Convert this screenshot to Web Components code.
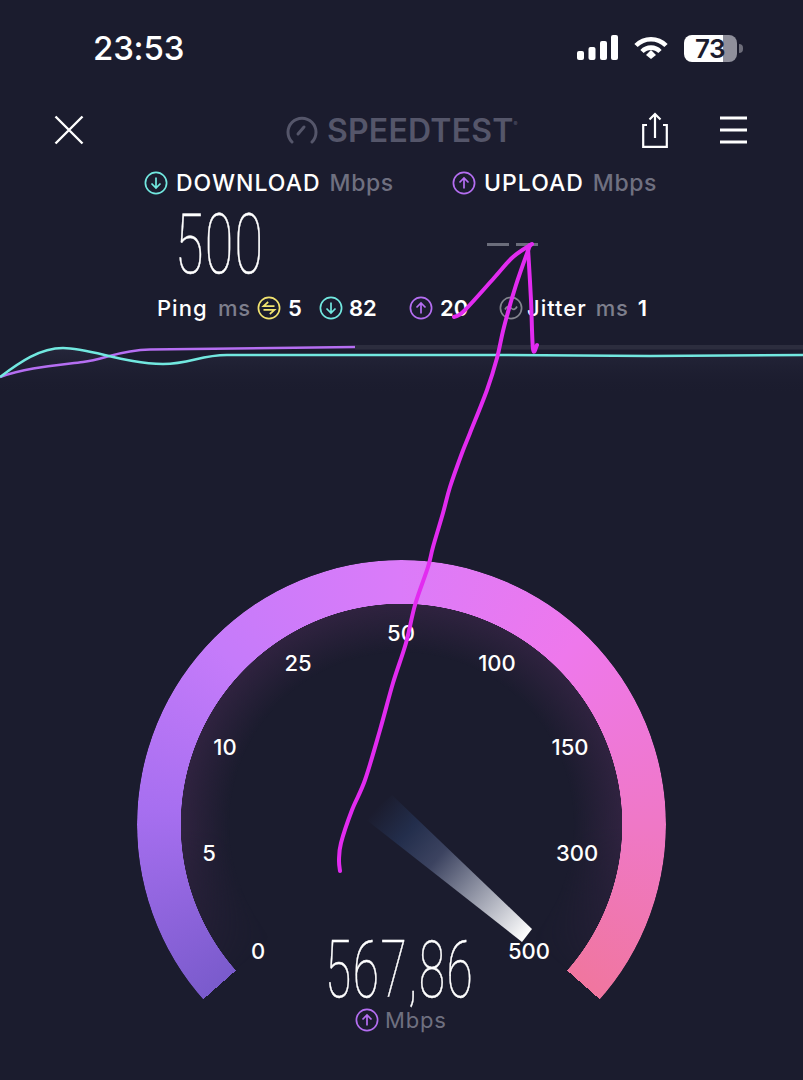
<!DOCTYPE html>
<html>
<head>
<meta charset="utf-8">
<style>
    html, body { margin: 0; background: #1b1c2e; }
    body {
        position: relative;
        width: 803px;
        height: 1080px;
        overflow: hidden;
        font-family: Inter, "Liberation Sans", sans-serif;
        color: #fff;
    }
</style>
</head>
<body>
<status-bar time="23:53" battery="73"></status-bar>
<top-nav></top-nav>
<speed-heads></speed-heads>
<big-values></big-values>
<stat-row></stat-row>
<speed-chart></speed-chart>
<speed-gauge value="567,86"></speed-gauge>
<pen-marks></pen-marks>

<script>
const circleIcon = (kind, size = 24) => {
    const colors = { down: '#72e8e0', up: '#b56ef2', ping: '#f2e36f', jitter: '#84858f' };
    const c = colors[kind];
    const inner = {
        down: '<path d="M12 6.500V17M7.500 12.500L12 17l4.500-4.500"/>',
        up: '<path d="M12 17.500V7M7.500 11.500L12 7l4.500 4.500"/>',
        ping: '<path d="M17.500 10.200H6.500l4.700-4.200M6.500 13.800h11l-4.700 4.200"/>',
        jitter: '<path d="M6 13.500c1.800-3.600 3.800-3.600 6-1.500s4.200 2.100 6-1.500"/>'
    }[kind];
    return `<svg width="${size}" height="${size}" viewBox="0 0 24 24" fill="none" stroke="${c}" stroke-width="1.7">
        <circle cx="12" cy="12" r="10.6"/>${inner}</svg>`;
};

class StatusBar extends HTMLElement {
    connectedCallback() {
        const root = this.attachShadow({mode:'open'});
        root.innerHTML = `
        <style>
            :host { display: flex; align-items: center; height: 96px; padding: 0 66px 0 93px; box-sizing: border-box; }
            .time { font-size: 33px; font-weight: 500; letter-spacing: -.2px; flex: 1; }
            .icons { display: flex; align-items: center; gap: 15px; }
            .battery { position: relative; display: flex; align-items: center; justify-content: flex-end;
                width: 53px; height: 27px; border-radius: 8px; padding-right: 12px; box-sizing: border-box;
                background: linear-gradient(90deg, #fff 39px, #8f8f9b 39px);
                color: #1b1c2e; font-size: 26px; font-weight: 600; letter-spacing: -.5px; }
            .battery::after { content: ''; position: absolute; right: -6px; top: 9px; width: 4px; height: 9px;
                border-radius: 0 4px 4px 0; background: #6d6d7a; }
        </style>
        <span class="time">${this.getAttribute('time')}</span>
        <div class="icons">
            <svg width="42" height="26" viewBox="0 0 42 26" fill="#fff">
                <rect x="0" y="16" width="7" height="9" rx="2"/>
                <rect x="11.500" y="12" width="7" height="13" rx="2"/>
                <rect x="23" y="6" width="7" height="19" rx="2"/>
                <rect x="34" y="0" width="7" height="25" rx="2"/>
            </svg>
            <svg width="36" height="24" viewBox="0 0 36 24" fill="none" stroke="#fff" stroke-width="4.6" style="margin-left:-1px">
                <path d="M3 9.500a21 21 0 0 1 30 0"/>
                <path d="M9 15.500a12.500 12.500 0 0 1 18 0"/>
                <path d="M13 20l5-5 5 5-5 4z" fill="#fff" stroke="none" transform="translate(0 -1)"/>
            </svg>
            <div class="battery">${this.getAttribute('battery')}</div>
        </div>`;
    }
}
customElements.define('status-bar', StatusBar);

class TopNav extends HTMLElement {
    connectedCallback() {
        const root = this.attachShadow({mode:'open'});
        root.innerHTML = `
        <style>
            :host { display: flex; align-items: center; height: 68px; padding: 0 56px 0 54px; box-sizing: border-box; }
            .logo { display: flex; align-items: center; gap: 9px; color: #55566a; width: 232px; margin-left: 202px;
                font-size: 32px; font-weight: 600; letter-spacing: .2px; }
            .logo sup { font-size: 6px; margin: -14px 0 0 -9px; }
            .share { margin-left: 124px; }
            .menu { margin-left: 52px; }
        </style>
        <svg width="30" height="30" viewBox="0 0 30 30" fill="none" stroke="#fff" stroke-width="2.4">
            <path d="M1.500 1.500l27 27M28.500 1.500l-27 27"/>
        </svg>
        <div class="logo">
            <svg width="32" height="28" viewBox="0 0 32 28" fill="none" stroke="#55566a" stroke-width="3" stroke-linecap="round">
                <path d="M6 26A14 14 0 1 1 26 26"/>
                <path d="M12 18l6-7"/>
            </svg>
            <span>SPEEDTEST</span><sup>®</sup>
        </div>
        <svg class="share" width="26" height="36" viewBox="0 0 26 36" fill="none" stroke="#fff" stroke-width="2.2">
            <path d="M5 13H1.200v21.800h23.600V13H21"/>
            <path d="M13 26V2M7.500 7.500L13 2l5.500 5.500"/>
        </svg>
        <svg class="menu" width="27" height="28" viewBox="0 0 27 28" stroke="#fff" stroke-width="3">
            <path d="M0 2h27M0 14h27M0 26h27"/>
        </svg>`;
    }
}
customElements.define('top-nav', TopNav);

class SpeedHeads extends HTMLElement {
    connectedCallback() {
        const root = this.attachShadow({mode:'open'});
        root.innerHTML = `
        <style>
            :host { display: flex; align-items: center; height: 36px; padding: 1px 0 0 144px; box-sizing: border-box; font-size: 23px; font-weight: 500; }
            .head { display: flex; align-items: center; width: 308px; }
            svg { margin-right: 8px; }
            b { font-weight: 500; letter-spacing: 1px; }
            span { color: #6f7080; margin-left: 9px; letter-spacing: .6px; }
        </style>
        <div class="head">${circleIcon('down')}<b>DOWNLOAD</b><span>Mbps</span></div>
        <div class="head">${circleIcon('up')}<b>UPLOAD</b><span>Mbps</span></div>`;
    }
}
customElements.define('speed-heads', SpeedHeads);

class BigValues extends HTMLElement {
    connectedCallback() {
        const root = this.attachShadow({mode:'open'});
        root.innerHTML = `
        <style>
            :host { display: flex; align-items: center; height: 86px; padding-left: 175px; }
            .num { font-family: Roboto, sans-serif; font-weight: 100; font-size: 84px; line-height: 90px; height: 86px;
                -webkit-text-stroke: .5px #fff; letter-spacing: 2px;
                display: inline-block; width: 213px; transform: scaleX(.62); transform-origin: left center; }
            .dash { display: flex; gap: 7px; margin: 2px 0 0 99px; }
            .dash i { display: block; width: 22px; height: 3px; background: #6b6d7b; }
        </style>
        <span class="num">500</span>
        <div class="dash"><i></i><i></i></div>`;
    }
}
customElements.define('big-values', BigValues);

class StatRow extends HTMLElement {
    connectedCallback() {
        const root = this.attachShadow({mode:'open'});
        root.innerHTML = `
        <style>
            :host { display: flex; align-items: center; height: 44px; padding-left: 157px; font-size: 22px; font-weight: 500; white-space: nowrap; }
            span { color: #7d7e8c; letter-spacing: .8px; }
            .g { display: flex; align-items: center; }
            b { font-weight: 600; }
            b.w { letter-spacing: 1px; font-weight: 500; }
        </style>
        <div class="g" style="width:61px"><b class="w">Ping</b></div>
        <div class="g" style="width:39px"><span>ms</span></div>
        <div class="g" style="width:62px">${circleIcon('ping')}<b style="margin-left:7px">5</b></div>
        <div class="g" style="width:90px">${circleIcon('down')}<b style="margin-left:6px">82</b></div>
        <div class="g" style="width:90px">${circleIcon('up')}<b style="margin-left:7px">20</b></div>
        <div class="g">${circleIcon('jitter')}<b class="w" style="margin-left:4px">Jitter</b><span style="margin-left:9px">ms</span><b style="margin-left:9px">1</b></div>`;
    }
}
customElements.define('stat-row', StatRow);

class SpeedChart extends HTMLElement {
    connectedCallback() {
        const root = this.attachShadow({mode:'open'});
        root.innerHTML = `
        <style>
            :host { display: block; height: 70px; margin-top: 8px; }
            svg { display: block; }
        </style>
        <svg width="803" height="70" viewBox="0 338 803 70" fill="none">
            <defs>
                <linearGradient id="glow" x1="0" y1="0" x2="0" y2="1">
                    <stop offset="0" stop-color="#2a2b40" stop-opacity=".7"/>
                    <stop offset="1" stop-color="#1b1c2e" stop-opacity="0"/>
                </linearGradient>
            </defs>
            <path d="M0 377C20 362 40 348 63 348C90 348 125 364 163 364C190 364 200 355 227 355L803 355V395H0Z" fill="url(#glow)"/>
            <rect x="355" y="345" width="448" height="4.500" fill="#2c2d3e"/>
            <path d="M0 377C25 368 50 366 83 362C105 359 120 350 150 349.500L355 347" stroke="#b56ef2" stroke-width="2.500"/>
            <path d="M0 377C20 362 40 348 63 348C90 348 125 364 163 364C190 364 200 355 227 355L500 355 650 356 803 355" stroke="#72e8e0" stroke-width="2.500"/>
        </svg>`;
    }
}
customElements.define('speed-chart', SpeedChart);

class SpeedGauge extends HTMLElement {
    connectedCallback() {
        const root = this.attachShadow({mode:'open'});
        const marks = [['0',258,951],['5',209,853],['10',225,747],['25',298,663],['50',401,633],
            ['100',497,663],['150',570,747],['300',577,853],['500',529,951]];
        // coordinates below are page pixels minus the gauge's own corner (137,560)
        const labels = marks.map(([t,x,y]) =>
            `<span class="mark" style="left:${x-137}px;top:${y-560}px">${t}</span>`).join('');
        root.innerHTML = `
        <style>
            :host { display: block; position: relative; width: 529px; height: 490px; margin: 152px 0 0 137px; }
            .sweep, .sweep > div { position: absolute; left: 0; top: 0; width: 529px; height: 529px; }
            .sweep { -webkit-mask: conic-gradient(from 228.6deg, #000 262.8deg, transparent 0);
                mask: conic-gradient(from 228.6deg, #000 262.8deg, transparent 0); }
            .ring { border-radius: 50%;
                background: conic-gradient(from 228.6deg, #7a5bcc 0deg, #a76ff0 45deg, #c57bfa 85deg, #db7bf9 131deg,
                    #ee78ec 175deg, #ef78c6 222deg, #f0769f 262.8deg);
                -webkit-mask: radial-gradient(closest-side, transparent 220.5px, #000 221px);
                mask: radial-gradient(closest-side, transparent 220.5px, #000 221px); }
            .glow { border-radius: 50%;
                background: radial-gradient(closest-side, transparent 172px, #302340 221px, transparent 221.5px);
                -webkit-mask: conic-gradient(from 228.6deg, transparent 0deg, #000 40deg, #000 222deg, transparent 262.8deg);
                mask: conic-gradient(from 228.6deg, transparent 0deg, #000 40deg, #000 222deg, transparent 262.8deg); }
            .mark { position: absolute; transform: translate(-50%, -50%); font-size: 22px; font-weight: 500; line-height: 1; }
            svg.needle { position: absolute; left: 0; top: 0; }
            .reading { position: absolute; left: 188px; top: 378px; height: 64px; font-family: Roboto, sans-serif; font-weight: 100;
                font-size: 80px; line-height: 64px; -webkit-text-stroke: .5px #fff; letter-spacing: 2.5px;
                transform: scaleX(.6); transform-origin: left top; white-space: nowrap; }
            .unit { position: absolute; left: 218px; top: 447px; display: flex; align-items: center; gap: 6px;
                color: #6f7080; font-size: 22px; font-weight: 400; letter-spacing: .8px; }
        </style>
        <div class="sweep"><div class="glow"></div><div class="ring"></div></div>
        <svg class="needle" width="529" height="490" viewBox="137 560 529 490">
            <defs>
                <linearGradient id="ng" gradientUnits="userSpaceOnUse" x1="378" y1="806" x2="527" y2="936">
                    <stop offset="0" stop-color="#232e4c" stop-opacity="0"/>
                    <stop offset=".2" stop-color="#232e4c"/>
                    <stop offset=".4" stop-color="#3c4360"/>
                    <stop offset="1" stop-color="#fff"/>
                </linearGradient>
            </defs>
            <path d="M392 795L532 929 522 942 364 818Z" fill="url(#ng)"/>
        </svg>
        ${labels}
        <div class="reading">${this.getAttribute('value')}</div>
        <div class="unit">${circleIcon('up')}Mbps</div>`;
    }
}
customElements.define('speed-gauge', SpeedGauge);

// catmull-rom through the points so the pen strokes don't look segmented
const smooth = pts => {
    let d = `M${pts[0][0]} ${pts[0][1]}`;
    for (let i = 0; i < pts.length - 1; i++) {
        const p0 = pts[i - 1] || pts[i], p1 = pts[i], p2 = pts[i + 1], p3 = pts[i + 2] || p2;
        const c1 = [p1[0] + (p2[0] - p0[0]) / 6, p1[1] + (p2[1] - p0[1]) / 6];
        const c2 = [p2[0] - (p3[0] - p1[0]) / 6, p2[1] - (p3[1] - p1[1]) / 6];
        d += `C${c1[0]} ${c1[1]} ${c2[0]} ${c2[1]} ${p2[0]} ${p2[1]}`;
    }
    return d;
};

class PenMarks extends HTMLElement {
    connectedCallback() {
        const root = this.attachShadow({mode:'open'});
        const main = [[340,871],[339,860],[341,843],[352,810],[365,780],[380,730],[393,683],[406,643],[415,605],
            [428,567],[433,547],[443,513],[450,487],[462,453],[470,433],[487,390],[497,358],[504,327],[516,285],[530,245]];
        const left = [[454,317],[464,311],[494,278],[513,257],[532,244]];
        const right = [[528,248],[531,300],[533,349],[537,345]];
        root.innerHTML = `
        <style>
            :host { position: absolute; left: 0; top: 0; width: 803px; height: 1080px; pointer-events: none; }
        </style>
        <svg width="803" height="1080" fill="none" stroke="#e22bf0" stroke-width="4" stroke-linecap="round" stroke-linejoin="round">
            <path d="${smooth(main)}"/>
            <path d="${smooth(left)}"/>
            <path d="${smooth(right)}"/>
        </svg>`;
    }
}
customElements.define('pen-marks', PenMarks);
</script>
</body>
</html>
